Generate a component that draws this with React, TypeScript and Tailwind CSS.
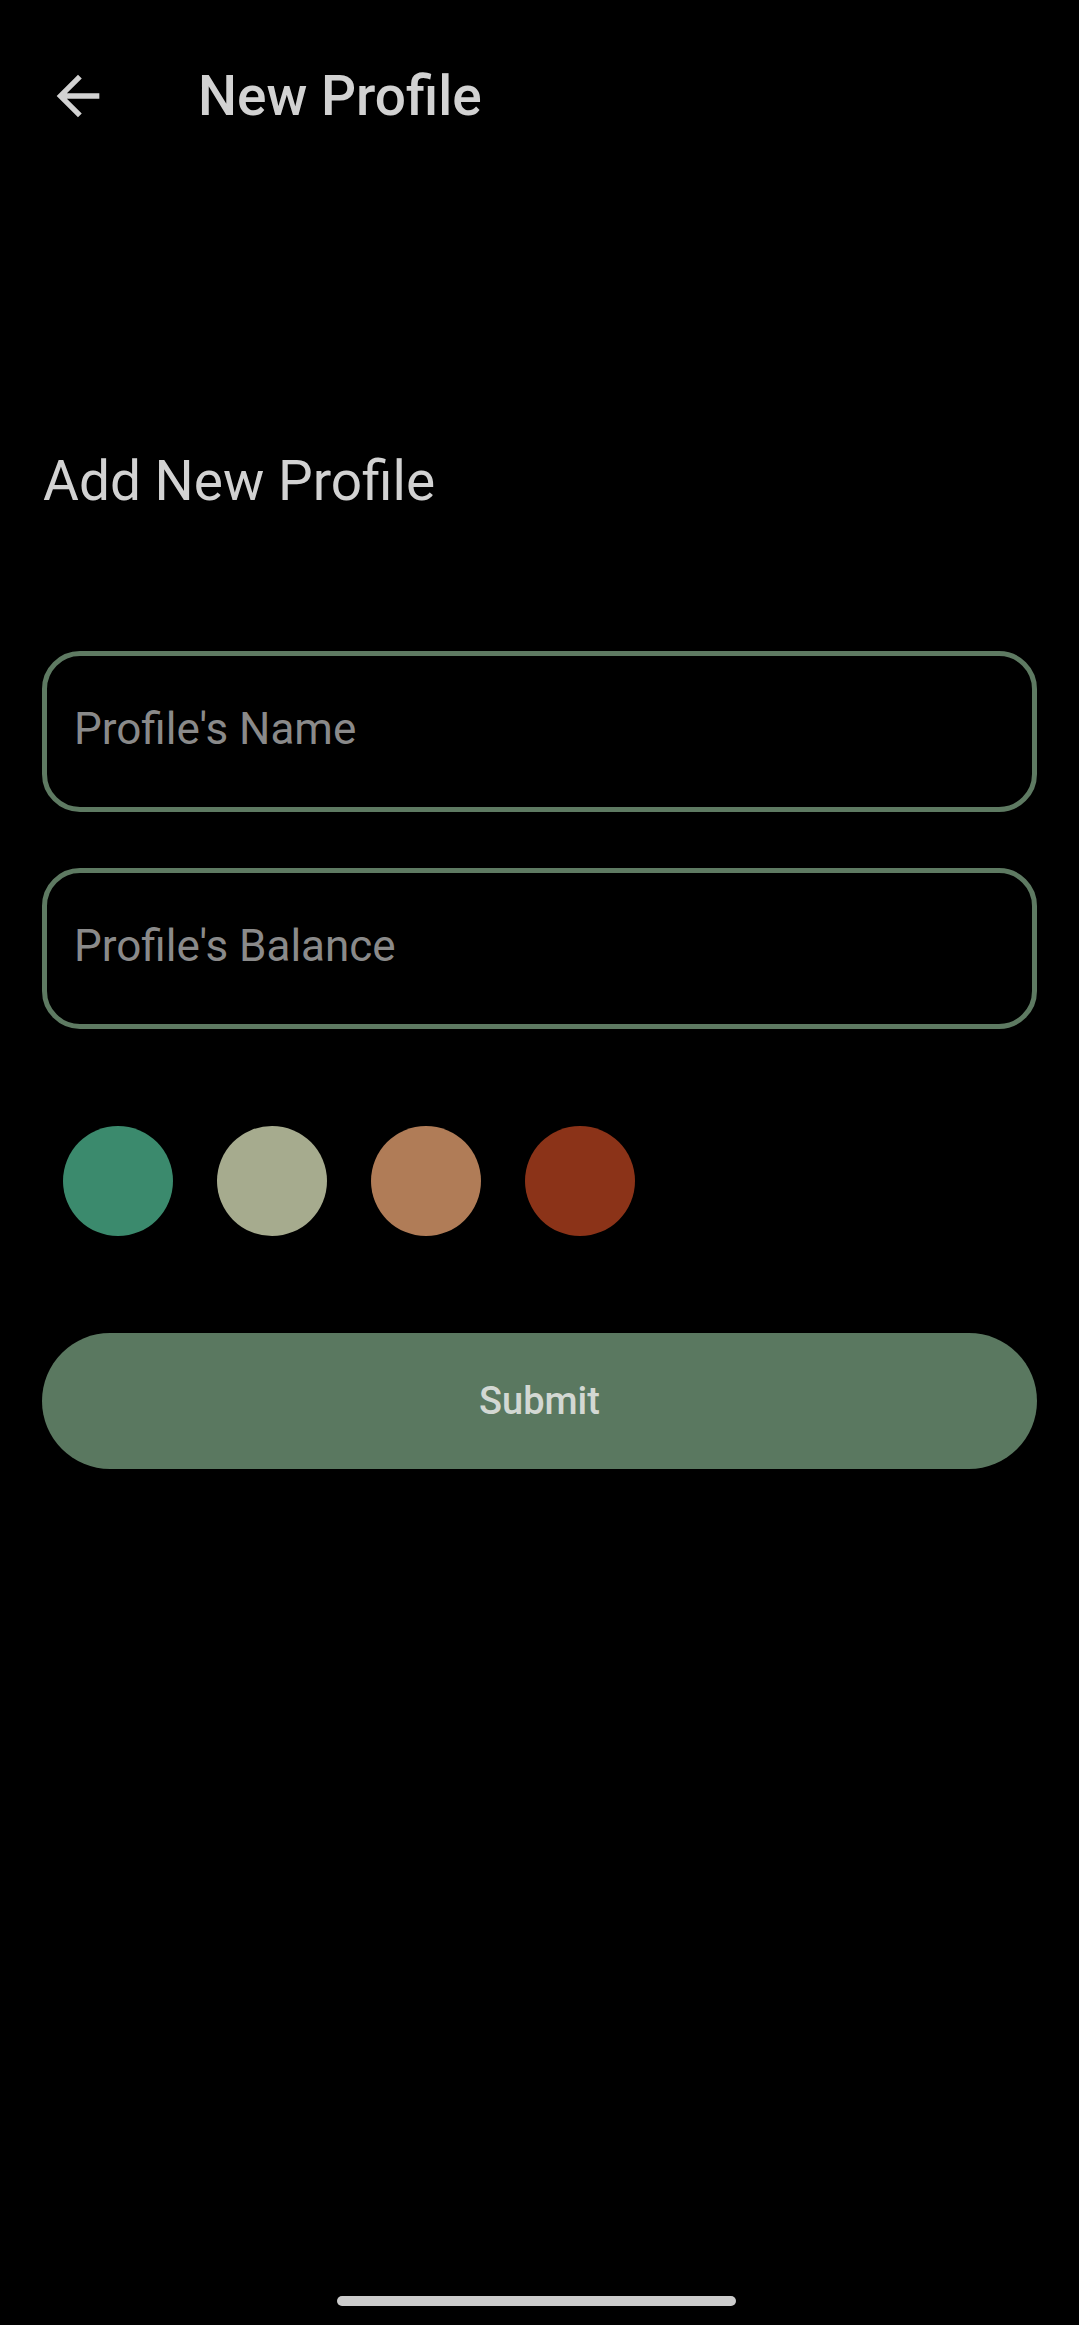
import { useState } from "react";

const swatches = ["#3b8a6d", "#a6ab8e", "#b07c57", "#8b3318"];

const BackArrow = () => (
  <svg viewBox="0 0 24 24" className="w-[64px] h-[64px]" fill="#d2d2d2">
    <path d="M20 11H7.83l5.59-5.59L12 4l-8 8 8 8 1.41-1.41L7.83 13H20v-2z" />
  </svg>
);

const App = () => {
  const [name, setName] = useState("");
  const [balance, setBalance] = useState("");
  const [picked, setPicked] = useState<number | null>(null);

  return (
    <div className="min-h-[2325px] bg-black flex flex-col font-['Roboto',sans-serif] text-[#d2d2d2]">
      {/* top bar */}
      <header className="flex items-center h-[192px] pl-[46px]">
        <button className="flex items-center justify-center">
          <BackArrow />
        </button>
        <h1 className="ml-[88px] text-[55px] leading-none font-medium">New Profile</h1>
      </header>

      <main className="flex flex-col px-[42px]">
        <h2 className="mt-[262px] ml-px text-[55px] leading-none font-normal">Add New Profile</h2>

        {/* inputs */}
        <div className="mt-[142px] flex flex-col gap-[56px]">
          <input
            value={name}
            onChange={(e) => setName(e.target.value)}
            placeholder="Profile's Name"
            className="h-[161px] w-full rounded-[38px] border-[5px] border-[#5e7a62] bg-black pl-[27px] pb-[5px] text-[44px] text-[#d2d2d2] placeholder:text-[#8a8a8a] outline-none"
          />
          <input
            value={balance}
            onChange={(e) => setBalance(e.target.value)}
            placeholder="Profile's Balance"
            className="h-[161px] w-full rounded-[38px] border-[5px] border-[#5e7a62] bg-black pl-[27px] pb-[5px] text-[44px] text-[#d2d2d2] placeholder:text-[#8a8a8a] outline-none"
          />
        </div>

        {/* colour picker */}
        <div className="mt-[97px] flex gap-[44px] pl-[21px]">
          {swatches.map((color, idx) => (
            <button
              key={color}
              onClick={() => setPicked(idx)}
              className={`w-[110px] h-[110px] rounded-full ${picked === idx ? "ring-4 ring-white" : ""}`}
              style={{ backgroundColor: color }}
            />
          ))}
        </div>

        <button className="mt-[97px] h-[136px] w-full rounded-full bg-[#5a7860] text-[38px] font-medium text-[#d3d8d3]">
          Submit
        </button>
      </main>

      {/* gesture bar */}
      <div className="mt-auto mb-[19px] flex justify-center pr-[6px]">
        <div className="w-[399px] h-[10px] rounded-full bg-[#cccccc]" />
      </div>
    </div>
  );
};

export default App;
